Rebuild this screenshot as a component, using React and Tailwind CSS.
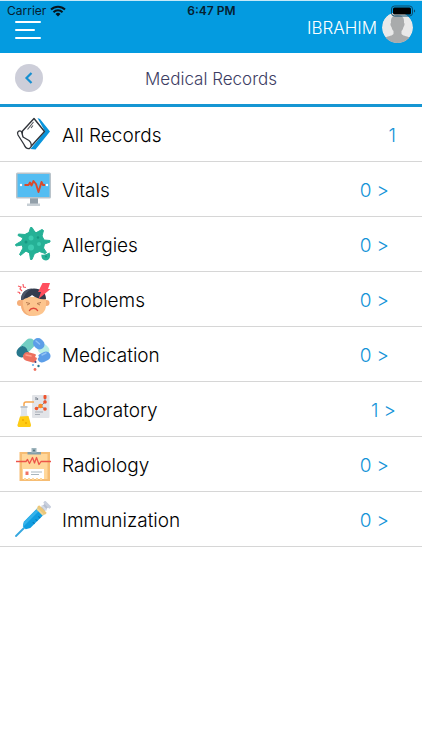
import React from 'react';

const AllRecordsIcon = () => (
  <svg viewBox="0 0 36 36" className="h-9 w-9 shrink-0" fill="none">
    <path d="M22.500 2 25 3 35 15.500 20.500 33.500 15.500 33 30 15.500Z" fill="#0a95dc" />
    <path d="M19 2.500 29.500 15.500 14.500 32 7 20 7.500 15Z" fill="#fff" stroke="#30343a" strokeWidth="1.400" strokeLinejoin="round" />
    <path
      d="M3 19C1.500 16 4 14 6.500 15.500L8 21 14 24.500C17 27 17 31 14.500 32.500 12 33 10 31 9 28.500Z"
      fill="#fff" stroke="#30343a" strokeWidth="1.300" strokeLinejoin="round"
    />
    <path d="m12.500 13.500 6-7.500M16 12l2-2.500" stroke="#50545a" strokeWidth="1.100" />
  </svg>
);

const VitalsIcon = () => (
  <svg viewBox="0 0 36 36" className="h-9 w-9 shrink-0" fill="none">
    <path d="M15 27h8v6h-8z" fill="#93a0aa" />
    <path d="M12 32.500h13V35H12z" fill="#c6ced4" />
    <rect x="1" y="1.500" width="35" height="26" rx="1.500" fill="#b9c3ca" />
    <rect x="2.500" y="3" width="32" height="23" fill="#53bdf2" />
    <path d="M9.500 14h4l1.500-2.500 1.500 3 2-4.500 2.500 3 2.500 8 3-10 1.500 3h2" stroke="#d84a2b" strokeWidth="1.900" strokeLinejoin="round" />
    <circle cx="6" cy="14" r="1.200" fill="#fff" />
    <circle cx="32" cy="14" r="1.200" fill="#fff" />
  </svg>
);

const AllergiesIcon = () => (
  <svg viewBox="0 0 36 36" className="h-9 w-9 shrink-0" fill="none">
    <path
      d="M15.500 1.500h1.500L20.500 7 27 3.500l1.500 1L27 10l2 4 6 .500v1.500l-5.500 2-1 4 3 4.500-1.500 1-5.500-2-5 2-2.500 6h-1.500L14.500 27 11 25l-5.500 4.500-1-1L8 22 7 19l-6 1-.500-1.500L6.500 15 8 12 3 9.500l.500-1.500L10 8.500l4-2Z"
      fill="#25b196" stroke="#25b196" strokeWidth="1" strokeLinejoin="round"
    />
    <circle cx="18" cy="16.500" r="11" fill="#25b196" />
    <circle cx="16" cy="12" r="2.500" fill="#3dccb0" />
    <circle cx="16" cy="21.500" r="3" fill="#3dccb0" />
    <circle cx="24" cy="18" r="2" fill="#3dccb0" />
    <circle cx="11" cy="16" r="1.500" fill="#159780" />
    <circle cx="23" cy="11.500" r="1.200" fill="#159780" />
    <path d="M26.500 28.500c3 1 5-.5 8-2 1.500 4 0 8-3.500 8s-5-3-4.500-6Z" fill="#25b196" />
    <circle cx="31" cy="30.500" r="1" fill="#159780" />
  </svg>
);

const ProblemsIcon = () => (
  <svg viewBox="0 0 36 36" className="h-9 w-9 shrink-0" fill="none">
    <circle cx="5" cy="22" r="3" fill="#f5ae78" />
    <circle cx="31.500" cy="22" r="3" fill="#f5ae78" />
    <path d="M6 16h25v8c0 7-5 11-12.500 11S6 31 6 24Z" fill="#fdc58e" />
    <path d="M8 18C7 27 10 34 18 35 10 35.500 6 30 6 23v-5Z" fill="#f5ae78" />
    <path d="M6 19C6 11 12 7.500 19 7.500S31 11 31 18c-5 1-10-1-14-4-3 3-7 3-9 5Z" fill="#343c4d" />
    <path d="M6 19C6 12 10 8 17 7.500 12 10 9 14 8 19Z" fill="#4d5669" />
    <path d="m11 21.500 4 1-3 1.500M26 21.500l-4 1 3 1.500" stroke="#b77c52" strokeWidth="1" />
    <path d="M14.500 29.500c1.500-3 6.500-3 8 0" stroke="#df473b" strokeWidth="1.500" strokeLinecap="round" />
    <path d="M27.500 2H35l-2 6h2.500L23.500 18 26 11h-3Z" fill="#ff4f5e" />
    <path d="m3 5 3 1-1 2 2 2M8 3l.500 3 2.500.500M2.500 11l2 .500L5 13" stroke="#f85b62" strokeWidth="1.200" />
  </svg>
);

const MedicationIcon = () => (
  <svg viewBox="0 0 36 36" className="h-9 w-9 shrink-0" fill="none">
    <g strokeWidth="10" strokeLinecap="round">
      <path d="m10 12.500 5-5" stroke="#72cec3" />
      <path d="m29.500 14.500-2-2" stroke="#b9eee5" />
      <path d="m6.500 16.500 1-1.200" stroke="#28778c" />
      <path d="m23 7 1.500 1.500" stroke="#5c9ee8" />
    </g>
    <path d="m7 10 8 8" stroke="#28778c" strokeWidth="1" />
    <g strokeLinecap="round">
      <path d="m31 20-4 2" stroke="#5c9ee8" strokeWidth="9" />
      <path d="m12.500 20.500 5.500 1.500" stroke="#ed7160" strokeWidth="9" />
      <path d="m11 19 5 1" stroke="#ffa08e" strokeWidth="1.500" />
      <path d="m27 19 4-2" stroke="#91c2f5" strokeWidth="1.500" />
      <path d="m21 5 3.500 3" stroke="#91c2f5" strokeWidth="1.500" />
    </g>
    <path d="m21.500 18-1.500 3 2 1-1 3 1 2h2l-1.500-4 1.500-2-1.500-3Z" fill="#fff" />
    <circle cx="18" cy="29" r="1.100" fill="#69b3ed" />
    <circle cx="23.500" cy="30" r="1.200" fill="#28778c" />
    <circle cx="20" cy="33.500" r="1.400" fill="#ed7160" />
    <circle cx="20.500" cy="26" r="1" fill="#3d4682" />
  </svg>
);

const LaboratoryIcon = () => (
  <svg viewBox="0 0 36 36" className="h-9 w-9 shrink-0" fill="none">
    <rect x="17" y="4" width="17.500" height="23" rx="1" fill="#e2e4e8" />
    <path d="M21 6v3M22.500 7v2" stroke="#858d98" strokeWidth="1.200" />
    <path d="m21.500 17.500 4-2.500 4.500 3M26 15l4-4V6" stroke="#69717d" strokeWidth=".8" />
    <circle cx="21.500" cy="17.500" r="1.800" fill="#ef542d" />
    <circle cx="25.500" cy="15" r="2.300" fill="#ff8b26" />
    <circle cx="30" cy="11" r="1.800" fill="#ef542d" />
    <circle cx="30" cy="18" r="1.800" fill="#ef542d" />
    <rect x="28.500" y="4" width="3" height="4" rx="1" fill="#ef542d" />
    <path d="M20 21h8M20 23.500h5" stroke="#a7adb6" strokeWidth="1" />
    <path d="M9 17v-4c0-1.500.5-2 2-2h8" stroke="#f7a64e" strokeWidth="1.500" />
    <path d="M6 16h6v7l4 11c0 1.500-.5 2-2 2H4.500c-1.500 0-2-.5-2-2L6 23Z" fill="#dfe4e9" />
    <path d="m5 25.500 8.500-.5L16 34c0 1.500-.5 2-2 2H4.500c-1.500 0-2-.5-2-2Z" fill="#ffcc13" />
    <rect x="5.500" y="15" width="7" height="2" rx=".5" fill="#bdc5ce" />
    <circle cx="8" cy="29" r="1" fill="#f1aa00" />
    <circle cx="11" cy="32" r="1" fill="#f1aa00" />
  </svg>
);

const RadiologyIcon = () => (
  <svg viewBox="0 0 36 36" className="h-9 w-9 shrink-0" fill="none">
    <path d="M4.500 6H35v29H4.500z" fill="#f6bd74" />
    <path d="M7 8h25.500v25H7z" fill="#ffd79a" />
    <path d="M12.500 6H26v2.500H12.500z" fill="#849fa9" />
    <path d="M16.500 2h5v5h-5z" fill="#9eb4bc" />
    <circle cx="19" cy="4.500" r="1" fill="#4d707d" />
    <path d="M1 15.500h10l1.500-2 2 4 3-6 2 5.500 2-5.500 2.500 7 2-3H36" stroke="#ed5549" strokeWidth="1.300" strokeLinejoin="round" />
    <path d="M8 23h21v10H8z" fill="#fff" />
    <path d="M10.500 25.500h3v3.500h-3z" fill="#f07363" />
    <path d="M16 26h11M16 28.500h8" stroke="#a9b6bd" strokeWidth="1" />
    <path d="M9 33h20" stroke="#ffd79a" strokeWidth="2" strokeDasharray="2 2" />
  </svg>
);

const ImmunizationIcon = () => (
  <svg viewBox="0 0 36 36" className="h-9 w-9 shrink-0" fill="none">
    <path d="M1 35 9 27" stroke="#35a7df" strokeWidth="1.800" strokeLinecap="round" />
    <g transform="rotate(45 22 14)">
      <path d="M19.500 0h5v7h-5z" fill="#b7bfd0" />
      <rect x="17.500" y="-2" width="9" height="3" rx="1" fill="#c8cfdd" />
      <rect x="18.500" y="3" width="7" height="2" rx="1" fill="#d5dbe5" />
      <path d="M17.500 8h9v20L24 32h-4l-2.500-4Z" fill="#119de0" />
      <path d="M17.500 8h3v24H20l-2.500-4Z" fill="#35b2ea" />
      <path d="M17.500 8h9v2.500h-9z" fill="#f1d694" />
      <rect x="16.500" y="5.500" width="11" height="3" rx="1" fill="#edc778" />
      <path d="M24 14h2.500M24 18h2.500M24 22h2.500" stroke="#0879b6" strokeWidth="1" />
    </g>
  </svg>
);

const records = [
  { label: 'All Records', count: 1, icon: AllRecordsIcon, arrow: false },
  { label: 'Vitals', count: 0, icon: VitalsIcon, arrow: true },
  { label: 'Allergies', count: 0, icon: AllergiesIcon, arrow: true },
  { label: 'Problems', count: 0, icon: ProblemsIcon, arrow: true },
  { label: 'Medication', count: 0, icon: MedicationIcon, arrow: true },
  { label: 'Laboratory', count: 1, icon: LaboratoryIcon, arrow: true },
  { label: 'Radiology', count: 0, icon: RadiologyIcon, arrow: true },
  { label: 'Immunization', count: 0, icon: ImmunizationIcon, arrow: true },
];

// Device status bar, floats over the app header
const StatusBar = () => (
  <div className="absolute inset-x-0 top-0 grid grid-cols-3 items-center pt-[3px] pl-[7px] pr-[6px] text-[12px] leading-[14px] text-[#06202f]">
    <div className="flex items-center gap-1">
      <span>Carrier</span>
      <svg viewBox="0 0 16 12" className="h-3 w-4" fill="none" stroke="#06141d" strokeWidth="2">
        <path d="M1 4.500a10 10 0 0 1 14 0M3.500 7.200a6.400 6.400 0 0 1 9 0" />
        <path d="M5.500 9a3.600 3.600 0 0 1 5 0L8 11.500Z" fill="#06141d" stroke="none" />
      </svg>
    </div>
    <span className="text-center font-semibold">6:47 PM</span>
    <svg viewBox="0 0 25 12" className="h-3 w-[25px] justify-self-end" fill="none">
      <rect x=".5" y="1" width="21" height="10" rx="3" stroke="#0b4a6b" />
      <rect x="2" y="2.500" width="18" height="7" rx="1.500" fill="#000" />
      <path d="M23 4.500c1.500.5 1.500 2.500 0 3Z" fill="#0b4a6b" />
    </svg>
  </div>
);

const Header = () => (
  <header className="relative flex h-[53px] items-start justify-between border-t border-[#c5e9f8] bg-[#049be0] pl-[15px] pr-[9px]">
    <button aria-label="Menu" className="mt-5 flex h-[18px] flex-col justify-between">
      <span className="h-[2px] w-[26px] rounded-full bg-white" />
      <span className="h-[2px] w-5 rounded-full bg-white" />
      <span className="h-[2px] w-[26px] rounded-full bg-white" />
    </button>
    <div className="mt-[11px] flex items-center gap-[5px]">
      <span className="text-[17px] font-light leading-5 text-white">IBRAHIM</span>
      <svg viewBox="0 0 31 31" className="h-[31px] w-[31px] rounded-full">
        <circle cx="15.500" cy="15.500" r="15.500" fill="#e9e9e9" />
        <path
          d="M15.500 3c5 0 7 3 6.500 8 1 0 .5 3-.5 4-.5 2-1 3-2 4v3c2 2.500 7 2 8.500 4-2 3-7 5-12.500 5S5 29 3 26c1.500-2 6.500-1.500 8.500-4v-3c-1-1-1.500-2-2-4-1-1-1.500-4-.5-4-.5-5 1.500-8 6.500-8Z"
          fill="#a9abac"
        />
      </svg>
    </div>
    <StatusBar />
  </header>
);

const App = () => {
  return (
    <div className="min-h-screen bg-white font-[Inter,sans-serif]">
      <Header />

      {/* Page title */}
      <div className="grid h-[54px] grid-cols-[28px_1fr_28px] items-center border-b-[3px] border-[#1596d3] px-[15px]">
        <button aria-label="Back" className="mb-[2px] flex h-7 w-7 items-center justify-center rounded-full bg-[#cdced9]">
          <svg viewBox="0 0 28 28" className="h-7 w-7" fill="none" stroke="#168fd0" strokeWidth="2.200">
            <path d="m16.500 9-5 5 5 5" />
          </svg>
        </button>
        <h1 className="text-center text-[17px] font-light leading-6 text-[#3d3d63]">Medical Records</h1>
      </div>

      <ul>
        {records.map(({ label, count, icon: Icon, arrow }) => (
          <li key={label} className="border-b border-[#d6d6d6]">
            <button
              className={`flex w-full items-center pl-[15px] py-[9px] text-left text-[19px] leading-6 ${
                arrow && count === 0 ? 'pr-[33px]' : 'pr-[26px]'
              }`}
            >
              <Icon />
              <span className="ml-[11px] flex-1 pt-[3px] font-light text-black">{label}</span>
              <span className="flex gap-[5px] pt-[3px] font-light text-[#1494d8]">
                <span>{count}</span>
                {arrow && <span>&gt;</span>}
              </span>
            </button>
          </li>
        ))}
      </ul>
    </div>
  );
};

export default App;
